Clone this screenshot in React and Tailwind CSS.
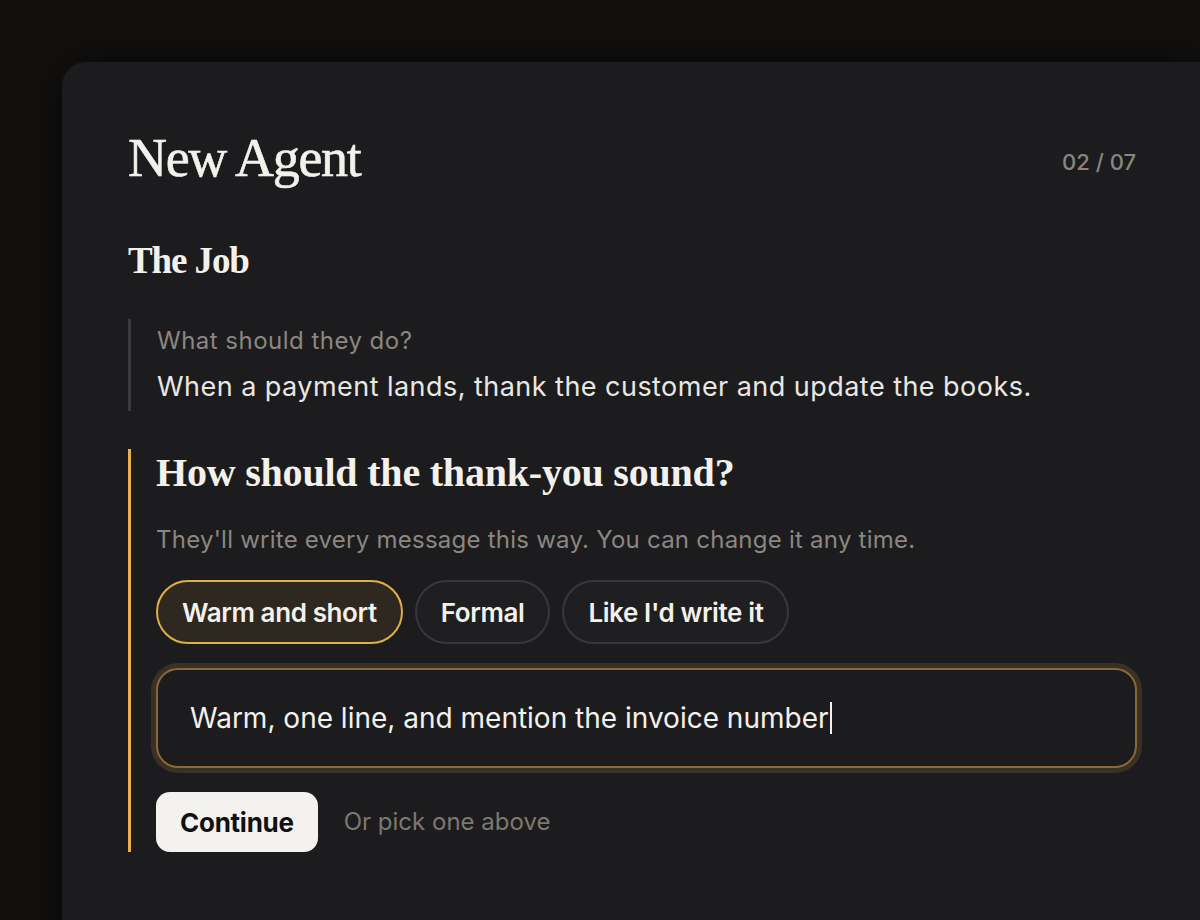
import { useState } from 'react';

const serif = { fontFamily: '"Liberation Serif", "DejaVu Serif", serif' };

// ── Tone chip ────────────────────────────────────────────────────────────────
function Chip({ label, active, onClick }) {
  return (
    <button
      onClick={onClick}
      className={`h-16 px-[24px] rounded-full border-2 text-[26px] font-semibold tracking-[-0.015em] text-[#f3f1ec] ${
        active ? 'border-[#e3ad48] bg-[#2f2821]' : 'border-[#38383a] bg-[#1f1f21]'
      }`}
    >
      {label}
    </button>
  );
}

export default function App() {
  const tones = ['Warm and short', 'Formal', "Like I'd write it"];
  const [tone, setTone] = useState(0);
  const text = 'Warm, one line, and mention the invoice number';

  return (
    <div
      className="w-[1200px] h-[920px] overflow-hidden bg-[#11100e] pt-[62px] pl-[62px]"
      style={{ fontFamily: 'Inter, "Noto Sans", sans-serif' }}
    >
      <div className="w-[1140px] h-[900px] rounded-tl-[24px] bg-[#1c1c1e] shadow-[0_0_40px_rgba(0,0,0,0.5)] pl-[66px] pr-[66px] pt-[66px]">
        {/* Header */}
        <div className="flex items-center justify-between">
          <h1
            style={serif}
            className="text-[54px] leading-[60px] text-[#f3f1ec] tracking-[-0.025em] [-webkit-text-stroke:0.6px_#f3f1ec]"
          >
            New Agent
          </h1>
          <span className="text-[22px] font-medium text-[#8b8780] mt-[8px]">02 / 07</span>
        </div>

        <h2 style={serif} className="mt-[50px] text-[37px] leading-[46px] font-bold text-[#f3f1ec] tracking-[-0.03em]">
          The Job
        </h2>

        {/* Answered question */}
        <div className="mt-[35px] border-l-[3px] border-[#3a3a3c] pl-[26px] py-[6px]">
          <p className="text-[24px] leading-[32px] text-[#8b8780] tracking-[0.02em]">What should they do?</p>
          <p className="mt-[12px] text-[27px] leading-[36px] text-[#e9e7e2] tracking-[0.017em]">
            When a payment lands, thank the customer and update the books.
          </p>
        </div>

        {/* Current question */}
        <div className="mt-[38px] border-l-[3px] border-[#e8b04a] pl-[25px]">
          <h3 style={serif} className="pt-[1px] text-[40px] leading-[46px] font-bold text-[#f3f1ec] tracking-[-0.005em]">
            How should the thank-you sound?
          </h3>
          <p className="mt-[28px] text-[24px] leading-[32px] text-[#8b8780] tracking-[0.01em]">
            They'll write every message this way. You can change it any time.
          </p>

          <div className="mt-[24px] flex gap-[12px]">
            {tones.map((t, i) => (
              <Chip key={t} label={t} active={tone === i} onClick={() => setTone(i)} />
            ))}
          </div>

          <div className="mt-[24px] w-[981px] rounded-[22px] border-2 border-[#8a6a34] ring-[5px] ring-[#3a3024] bg-[#1c1c1e] h-[100px] flex items-center px-[32px]">
            <span className="text-[28px] text-[#f3f1ec]">{text}</span>
            <span className="ml-[1px] w-[2px] h-[32px] bg-[#f3f1ec]" />
          </div>

          <div className="mt-[24px] flex items-center gap-[26px]">
            <button className="h-[60px] px-[24px] rounded-[14px] bg-[#f3f2ee] text-[#111111] text-[26px] font-bold tracking-[-0.01em]">
              Continue
            </button>
            <span className="text-[24px] text-[#7c7872]">Or pick one above</span>
          </div>
        </div>
      </div>
    </div>
  );
}
